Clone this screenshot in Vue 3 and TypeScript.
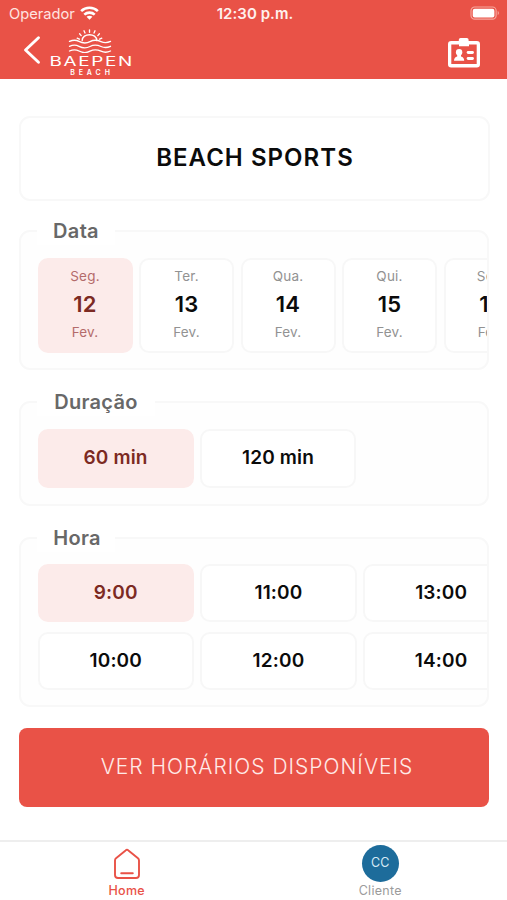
<script setup lang="ts">
import { ref } from 'vue'

interface Day {
  week: string
  day: number
  month: string
}

const days: Day[] = [
  { week: 'Seg.', day: 12, month: 'Fev.' },
  { week: 'Ter.', day: 13, month: 'Fev.' },
  { week: 'Qua.', day: 14, month: 'Fev.' },
  { week: 'Qui.', day: 15, month: 'Fev.' },
  { week: 'Sex.', day: 16, month: 'Fev.' },
]
const durations: string[] = ['60 min', '120 min']
const hours: string[] = ['9:00', '10:00', '11:00', '12:00', '13:00', '14:00']

const selectedDay = ref<number>(12)
const selectedDuration = ref<string>('60 min')
const selectedHour = ref<string>('9:00')
</script>

<template>
  <div class="screen">
    <header class="top">
      <div class="status">
        <div class="carrier">
          <span>Operador</span>
          <svg width="19" height="14.5" viewBox="0 0 20 15" fill="none" stroke="#fff" stroke-width="2.7">
            <path d="M1.2 5.3C6 .6 14 .6 18.8 5.3" />
            <path d="M4.5 9C7.6 6.1 12.4 6.1 15.5 9" />
            <path d="M6.9 11.2C8.7 9.6 11.3 9.6 13.1 11.2L10 14.3Z" fill="#fff" stroke="none" />
          </svg>
        </div>
        <span class="clock">12:30 p.m.</span>
        <svg class="battery" width="31" height="14.5" viewBox="0 0 32 15">
          <rect x="1" y="1" width="26" height="12.6" rx="3.8" fill="none" stroke="#f6a79e" stroke-width="1.2" />
          <rect x="2.8" y="2.8" width="22.4" height="9" rx="2" fill="#fff" />
          <path d="M28.6 5.2C30.3 6 30.3 8.6 28.6 9.4Z" fill="#f6a79e" />
        </svg>
      </div>
      <div class="nav">
        <button class="back" aria-label="Voltar">
          <svg width="18" height="30" viewBox="0 0 18 30" fill="none" stroke="#fff" stroke-width="2.9" stroke-linecap="round" stroke-linejoin="round">
            <path d="M15.5 2.8L2.5 15L15.5 27.2" />
          </svg>
        </button>
        <div class="logo">
          <svg width="44" height="24" viewBox="0 0 44 24" fill="none" stroke="#fff" stroke-width="1.35" stroke-linecap="round">
            <path d="M14.2 11.5C14.2 3.8 28.8 3.8 28.8 11.5" />
            <path d="M21.5 .8V3.2M16 1.8L17 4M27 1.8L26 4M11.6 4.8L13.2 6.6M31.4 4.8L29.8 6.6M9.2 9.2L11.4 10.2M33.8 9.2L31.6 10.2" />
            <path d="M1.5 12.4C5 10.8 8 10.8 11 12.4S18 14.7 22 12.6S29 10.8 33 12.6S40 13.6 42.5 12.4" />
            <path d="M1.5 17.3C5 15.7 8 15.7 11 17.3S18 19.6 22 17.5S29 15.7 33 17.5S40 18.5 42.5 17.3" />
            <path d="M1.5 22C5 20.4 8 20.4 11 22S18 24.3 22 22.2S29 20.4 33 22.2S40 23.2 42.5 22" />
          </svg>
          <span class="brand">BAEPEN</span>
          <span class="brand-sub">BEACH</span>
        </div>
        <button class="badge" aria-label="Cartão">
          <svg width="34" height="32" viewBox="0 0 34 32" fill="#fff">
            <path fill-rule="evenodd" d="M4.2 4H11.8V2.8Q11.8 1 13.6 1H19.8Q21.6 1 21.6 2.8V4H29.8Q33 4 33 7.2V27.2Q33 30.4 29.8 30.4H4.2Q1 30.4 1 27.2V7.2Q1 4 4.2 4ZM4.3 7.5V27.1H29.7V7.5H22V9.3H12V7.5Z" />
            <circle cx="12.1" cy="15.2" r="3.2" />
            <path d="M10.2 17H14V19.4Q17.2 20 17.2 23.8H7Q7 20 10.2 19.4Z" />
            <rect x="19.7" y="14" width="7.2" height="3" rx="1.4" />
            <rect x="19.7" y="20" width="7.2" height="3" rx="1.4" />
          </svg>
        </button>
      </div>
    </header>

    <main class="content">
      <h1 class="title"><span>BEACH SPORTS</span></h1>

      <section class="group dates">
        <h2 class="legend">Data</h2>
        <div class="scroller">
          <button v-for="d in days" :key="d.day" class="option day" :class="{ active: d.day === selectedDay }" @click="selectedDay = d.day">
            <small>{{ d.week }}</small>
            <strong>{{ d.day }}</strong>
            <small>{{ d.month }}</small>
          </button>
        </div>
      </section>

      <section class="group durations">
        <h2 class="legend wide">Duração</h2>
        <div class="scroller">
          <button v-for="d in durations" :key="d" class="option duration" :class="{ active: d === selectedDuration }" @click="selectedDuration = d">{{ d }}</button>
        </div>
      </section>

      <section class="group times">
        <h2 class="legend">Hora</h2>
        <div class="scroller hours">
          <button v-for="h in hours" :key="h" class="option hour" :class="{ active: h === selectedHour }" @click="selectedHour = h">{{ h }}</button>
        </div>
      </section>

      <button class="submit">VER HORÁRIOS DISPONÍVEIS</button>
    </main>

    <nav class="tabs">
      <a class="tab current">
        <span class="tab-icon">
          <svg width="28" height="32" viewBox="0 0 28 32" fill="none" stroke="#e95247" stroke-width="1.9" stroke-linecap="round" stroke-linejoin="round">
            <path d="M12.6 2.4Q14 1.2 15.4 2.4L25 10.2Q26 11 26 12.4V27Q26 30 23 30H5Q2 30 2 27V12.4Q2 11 3 10.2Z" />
            <path d="M8.2 25.2H19.8" />
          </svg>
        </span>
        <span>Home</span>
      </a>
      <a class="tab">
        <span class="tab-icon"><span class="avatar">CC</span></span>
        <span>Cliente</span>
      </a>
    </nav>
  </div>
</template>

<style>
body {
  background: #fff;
}
</style>

<style scoped>
* {
  box-sizing: border-box;
}
.screen {
  display: flex;
  flex-direction: column;
  width: 507px;
  height: 900px;
  overflow: hidden;
  background: #fff;
  font-family: Inter, 'Liberation Sans', sans-serif;
  color: #0b0b0b;
}
button {
  padding: 0;
  border: 0;
  background: none;
  font: inherit;
  color: inherit;
}
svg {
  display: block;
}
.top {
  flex: none;
  height: 79px;
  background: #e95247;
  color: #fff;
}
.status {
  display: grid;
  grid-template-columns: 1fr auto 1fr;
  align-items: center;
  height: 27px;
  padding: 0 6px 0 9px;
}
.carrier {
  display: flex;
  align-items: center;
  gap: 5px;
  font-size: 14.7px;
  color: #ffe4e0;
}
.clock {
  font-size: 15px;
  font-weight: 600;
  letter-spacing: 0.05px;
  color: #fff0ed;
}
.battery {
  justify-self: end;
}
.nav {
  display: flex;
  align-items: flex-start;
  height: 52px;
  padding: 0 26px 0 23px;
}
.back {
  margin-top: 8px;
}
.logo {
  display: flex;
  flex-direction: column;
  align-items: center;
  width: 84px;
  margin: 2px 0 0 7px;
}
.brand {
  margin-top: 2px;
  padding-left: 3px;
  font-size: 13.5px;
  line-height: 12px;
  letter-spacing: 1.2px;
  transform: scaleX(1.4);
}
.brand-sub {
  margin-top: 2px;
  padding-left: 4px;
  font-size: 7px;
  line-height: 7px;
  font-weight: 600;
  letter-spacing: 3.9px;
}
.badge {
  margin: 10px 0 0 auto;
}
.content {
  flex: 1;
  display: flex;
  flex-direction: column;
  padding: 37px 18px 0 19px;
}
.title {
  display: flex;
  align-items: center;
  justify-content: center;
  height: 85px;
  margin: 0 -1px 0 0;
  border: 2px solid #f8f8f8;
  border-radius: 11px;
  font-size: 24px;
  font-weight: 600;
  letter-spacing: 1.05px;
  padding: 0 0 2px 1px;
}
.group {
  border: 2px solid #f8f8f8;
  border-radius: 11px;
  background: #fefefe;
}
.dates {
  height: 140px;
  margin-top: 29px;
}
.durations {
  height: 105px;
  margin-top: 31px;
}
.times {
  height: 170px;
  margin-top: 31px;
}
.legend {
  display: flex;
  align-items: center;
  justify-content: center;
  width: 78px;
  height: 28px;
  margin: -15px 0 0 16px;
  background: #fff;
  font-size: 20px;
  font-weight: 600;
  letter-spacing: 0.3px;
  color: #686868;
}
.legend.wide {
  width: 118px;
}
.times .legend {
  padding-left: 2px;
}
.scroller {
  display: flex;
  gap: 6.5px;
  margin: 13px 0 0 16.5px;
  overflow: hidden;
}
.scroller.hours {
  display: grid;
  grid-template-rows: 58px 58px;
  grid-auto-flow: column;
  grid-auto-columns: 156.5px;
  gap: 10px 6.2px;
  margin-top: 12px;
}
.option {
  flex: none;
  border: 2px solid #f7f7f7;
  border-radius: 10px;
  background: #fff;
  font-size: 19px;
  font-weight: 600;
  letter-spacing: 0.15px;
}
.day {
  display: flex;
  flex-direction: column;
  align-items: center;
  width: 95px;
  height: 95px;
  padding-top: 8px;
}
.day small {
  font-size: 13.5px;
  line-height: 17px;
  font-weight: 400;
  letter-spacing: 0.2px;
  color: #929292;
}
.day strong {
  height: 39px;
  font-size: 22px;
  line-height: 39px;
  font-weight: 600;
}
.duration {
  width: 156px;
  height: 59px;
  padding-bottom: 2px;
}
.hour {
  padding-bottom: 2px;
}
.option.active {
  border-color: #fcebea;
  background: #fcebea;
  color: #7c2a23;
}
.active.day small {
  color: #b46b6b;
}
.submit {
  flex: none;
  height: 79px;
  margin-top: 21px;
  padding: 0 0 2px 6px;
  border-radius: 8px;
  background: #e95247;
  font-size: 21px;
  font-weight: 300;
  letter-spacing: 1px;
  color: #ffeae7;
}
.tabs {
  flex: none;
  display: flex;
  height: 60px;
  border-top: 2px solid #eeeeee;
}
.tab {
  flex: 1;
  display: flex;
  flex-direction: column;
  align-items: center;
  padding-top: 3px;
  font-size: 12.5px;
  line-height: 18px;
  letter-spacing: 0.3px;
  color: #9b9b9b;
}
.current {
  color: #e95247;
  font-weight: 500;
}
.tab-icon {
  display: flex;
  align-items: center;
  justify-content: center;
  height: 37px;
}
.avatar {
  width: 37px;
  height: 37px;
  border-radius: 50%;
  background: #1d6c9b;
  font-size: 12.5px;
  line-height: 36px;
  letter-spacing: 0;
  text-align: center;
  color: #d7eaf5;
}
</style>
